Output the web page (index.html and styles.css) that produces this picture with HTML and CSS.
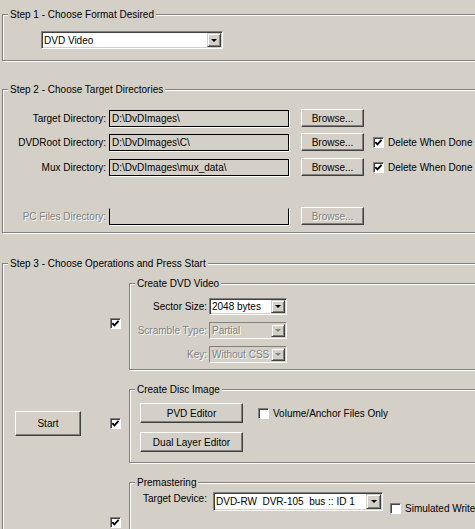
FILE: index.html
```html
<!DOCTYPE html>
<html>
<head>
<meta charset="utf-8">
<title>DVD Builder</title>
<link rel="stylesheet" href="styles.css">
</head>
<body>
<div class="page">

  <fieldset class="group step1">
    <legend>Step 1 - Choose Format Desired</legend>
    <div class="step1-body">
      <div class="combo combo-format">
        <span class="combo-text">DVD Video</span>
        <span class="combo-btn"><i class="arrow"></i></span>
      </div>
    </div>
  </fieldset>

  <fieldset class="group step2">
    <legend>Step 2 - Choose Target Directories</legend>
    <div class="step2-body">
      <div class="dir-row">
        <div class="dir-label"><span>Target Directory:</span></div>
        <div class="textbox">D:\DvDImages\</div>
        <button class="btn browse">Browse...</button>
      </div>
      <div class="dir-row row2">
        <div class="dir-label"><span>DVDRoot Directory:</span></div>
        <div class="textbox">D:\DvDImages\C\</div>
        <button class="btn browse">Browse...</button>
        <label class="checkline dir-check"><span class="check"><svg width="9" height="9" viewBox="0 0 9 9"><path d="M1.3 4.2 L3.4 6.4 L7.6 1.8" fill="none" stroke="#000" stroke-width="1.8"/></svg></span><span>Delete When Done</span></label>
      </div>
      <div class="dir-row row3">
        <div class="dir-label"><span>Mux Directory:</span></div>
        <div class="textbox">D:\DvDImages\mux_data\</div>
        <button class="btn browse">Browse...</button>
        <label class="checkline dir-check"><span class="check"><svg width="9" height="9" viewBox="0 0 9 9"><path d="M1.3 4.2 L3.4 6.4 L7.6 1.8" fill="none" stroke="#000" stroke-width="1.8"/></svg></span><span>Delete When Done</span></label>
      </div>
      <div class="dir-row row-pc">
        <div class="dir-label disabled"><span>PC Files Directory:</span></div>
        <div class="textbox textbox-disabled"></div>
        <button class="btn browse disabled">Browse...</button>
      </div>
    </div>
  </fieldset>

  <fieldset class="group step3">
    <legend>Step 3 - Choose Operations and Press Start</legend>
    <div class="ops">
      <div class="ops-check row-a"><span class="check"><svg width="9" height="9" viewBox="0 0 9 9"><path d="M1.3 4.2 L3.4 6.4 L7.6 1.8" fill="none" stroke="#000" stroke-width="1.8"/></svg></span></div>
      <fieldset class="group sub row-a dvdvideo">
        <legend>Create DVD Video</legend>
        <div class="dvdvideo-body">
          <div class="opt-row">
            <div class="opt-label">Sector Size:</div>
            <div class="combo combo-small">
              <span class="combo-text">2048 bytes</span>
              <span class="combo-btn"><i class="arrow"></i></span>
            </div>
          </div>
          <div class="opt-row">
            <div class="opt-label disabled">Scramble Type:</div>
            <div class="combo combo-small combo-disabled">
              <span class="combo-text">Partial</span>
              <span class="combo-btn"><i class="arrow"></i></span>
            </div>
          </div>
          <div class="opt-row">
            <div class="opt-label disabled">Key:</div>
            <div class="combo combo-small combo-disabled">
              <span class="combo-text">Without CSS</span>
              <span class="combo-btn"><i class="arrow"></i></span>
            </div>
          </div>
        </div>
      </fieldset>

      <button class="btn start row-b">Start</button>
      <div class="ops-check row-b"><span class="check"><svg width="9" height="9" viewBox="0 0 9 9"><path d="M1.3 4.2 L3.4 6.4 L7.6 1.8" fill="none" stroke="#000" stroke-width="1.8"/></svg></span></div>
      <fieldset class="group sub row-b discimage">
        <legend>Create Disc Image</legend>
        <div class="discimage-body">
          <button class="btn editor">PVD Editor</button>
          <label class="checkline vol-check"><span class="check"></span><span>Volume/Anchor Files Only</span></label>
          <button class="btn editor">Dual Layer Editor</button>
        </div>
      </fieldset>

      <div class="ops-check row-c"><span class="check"><svg width="9" height="9" viewBox="0 0 9 9"><path d="M1.3 4.2 L3.4 6.4 L7.6 1.8" fill="none" stroke="#000" stroke-width="1.8"/></svg></span></div>
      <fieldset class="group sub row-c premaster">
        <legend>Premastering</legend>
        <div class="premaster-body">
          <div class="device-label">Target Device:</div>
          <div class="combo combo-device">
            <span class="combo-text">DVD-RW&nbsp; DVR-105&nbsp; bus :: ID 1</span>
            <span class="combo-btn"><i class="arrow"></i></span>
          </div>
          <label class="checkline sim-check"><span class="check"></span><span>Simulated Write</span></label>
        </div>
      </fieldset>
    </div>
  </fieldset>

</div>
</body>
</html>
```

FILE: styles.css
```css
html, body {
  margin: 0;
  padding: 0;
  overflow: hidden;
  background: #d4d0c8;
}

body {
  font-family: "Liberation Sans", Arial, sans-serif;
  font-size: 10px;
  line-height: 13px;
  color: #000;
}

.page {
  width: 540px;
  padding: 8px 0 0 2px;
}

/* etched group box */
.group {
  margin: 0;
  padding: 0;
  min-width: 0;
  border: 1px solid #808080;
  box-shadow: inset 1px 1px 0 #fff, 1px 1px 0 #fff;
}

.group > legend {
  margin-left: 5px;
  padding: 0 2px;
  line-height: 13px;
  background: #d4d0c8;
}

.disabled {
  color: #808080;
  text-shadow: 1px 1px 0 #fff;
}

/* combo boxes */
.combo {
  box-sizing: border-box;
  display: flex;
  padding: 1px;
  border: 1px solid;
  border-color: #808080 #fff #fff #808080;
  box-shadow: inset 1px 1px 0 #404040, inset -1px -1px 0 #d4d0c8;
  background: #fff;
}

.combo-text {
  flex: 1;
  padding-left: 1px;
  white-space: nowrap;
  overflow: hidden;
  display: flex;
  align-items: center;
}

.combo-btn {
  box-sizing: border-box;
  width: 14px;
  display: flex;
  align-items: center;
  justify-content: center;
  background: #d4d0c8;
  border: 1px solid;
  border-color: #d4d0c8 #404040 #404040 #d4d0c8;
  box-shadow: inset 1px 1px 0 #fff, inset -1px -1px 0 #808080;
}

.arrow {
  width: 0;
  height: 0;
  border-left: 3px solid transparent;
  border-right: 3px solid transparent;
  border-top: 3px solid #000;
}

.combo-disabled {
  background: #d4d0c8;
  box-shadow: inset 1px 1px 0 #d4d0c8;
}

.combo-disabled .combo-text {
  color: #808080;
  text-shadow: 1px 1px 0 #fff;
}

.combo-disabled .arrow {
  border-top-color: #808080;
}

/* buttons */
.btn {
  -webkit-appearance: none;
  appearance: none;
  margin: 0;
  padding: 0;
  font: inherit;
  line-height: 13px;
  color: #000;
  background: #d4d0c8;
  box-sizing: border-box;
  border: 1px solid;
  border-color: #fff #404040 #404040 #fff;
  box-shadow: inset -1px -1px 0 #808080;
  text-align: center;
}

.btn.disabled {
  color: #808080;
  text-shadow: 1px 1px 0 #fff;
}

/* checkboxes */
.check {
  box-sizing: border-box;
  width: 11px;
  height: 11px;
  display: flex;
  align-items: center;
  justify-content: center;
  background: #fff;
  border: 1px solid;
  border-color: #808080 #fff #fff #808080;
  box-shadow: inset 1px 1px 0 #404040;
  flex: none;
}

.check svg {
  display: block;
}

.checkline {
  display: flex;
  align-items: center;
  gap: 4px;
  white-space: nowrap;
}

/* step 1 */
.step1-body {
  padding: 10px 0 11px 38px;
}

.combo-format {
  width: 182px;
  height: 18px;
}

/* step 2 */
.step2 {
  margin-top: 22px;
}

.step2-body {
  padding: 13px 0 7px 0;
}

.dir-row {
  display: flex;
  align-items: center;
  height: 18px;
}

.dir-row.row2 {
  margin-top: 6px;
}

.dir-row.row3 {
  margin-top: 7px;
}

.dir-row.row-pc {
  margin-top: 31px;
}

.dir-label {
  width: 103px;
  margin-right: 3px;
  display: flex;
  justify-content: flex-end;
  overflow: hidden;
  white-space: nowrap;
}

.textbox {
  box-sizing: border-box;
  width: 180px;
  height: 17px;
  padding-left: 2px;
  border: 1px solid #000;
  box-shadow: 1px 1px 0 #fff;
  white-space: nowrap;
  overflow: hidden;
  display: flex;
  align-items: center;
}

.textbox-disabled {
  border-top-color: #d4d0c8;
}

.browse {
  width: 63px;
  height: 18px;
  margin-left: 12px;
}

.dir-check {
  margin-left: 9px;
}

/* step 3 */
.step3 {
  margin-top: 24px;
}

.ops {
  display: grid;
  grid-template-columns: 107px 19px 1fr;
  row-gap: 13px;
  align-items: center;
  padding-top: 7px;
}

.row-a { grid-row: 1; }
.row-b { grid-row: 2; }
.row-c { grid-row: 3; }

.ops-check {
  grid-column: 2;
  display: flex;
}

.sub {
  grid-column: 3;
}

.start {
  grid-column: 1;
  justify-self: start;
  width: 66px;
  height: 25px;
  margin-left: 12px;
}

.dvdvideo-body {
  padding: 8px 0 6px 0;
  display: flex;
  flex-direction: column;
  gap: 7px;
}

.opt-row {
  display: flex;
  align-items: center;
}

.opt-label {
  width: 77px;
  margin-right: 2px;
  text-align: right;
  white-space: nowrap;
}

.combo-small {
  width: 78px;
  height: 17px;
}

.discimage-body {
  padding: 7px 0 10px 10px;
  display: grid;
  grid-template-columns: 103px auto;
  row-gap: 9px;
  align-items: center;
}

.editor {
  width: 103px;
  height: 20px;
  grid-column: 1;
}

.vol-check {
  grid-column: 2;
  grid-row: 1;
  margin-left: 15px;
  justify-self: start;
}

.premaster-body {
  display: flex;
  align-items: flex-start;
  padding: 3px 0 52px 13px;
}

.device-label {
  width: 70px;
  white-space: nowrap;
}

.combo-device {
  width: 170px;
  height: 19px;
}

.combo-device .combo-btn {
  width: 15px;
}

.sim-check {
  margin-left: 7px;
  margin-top: 10px;
}
```
